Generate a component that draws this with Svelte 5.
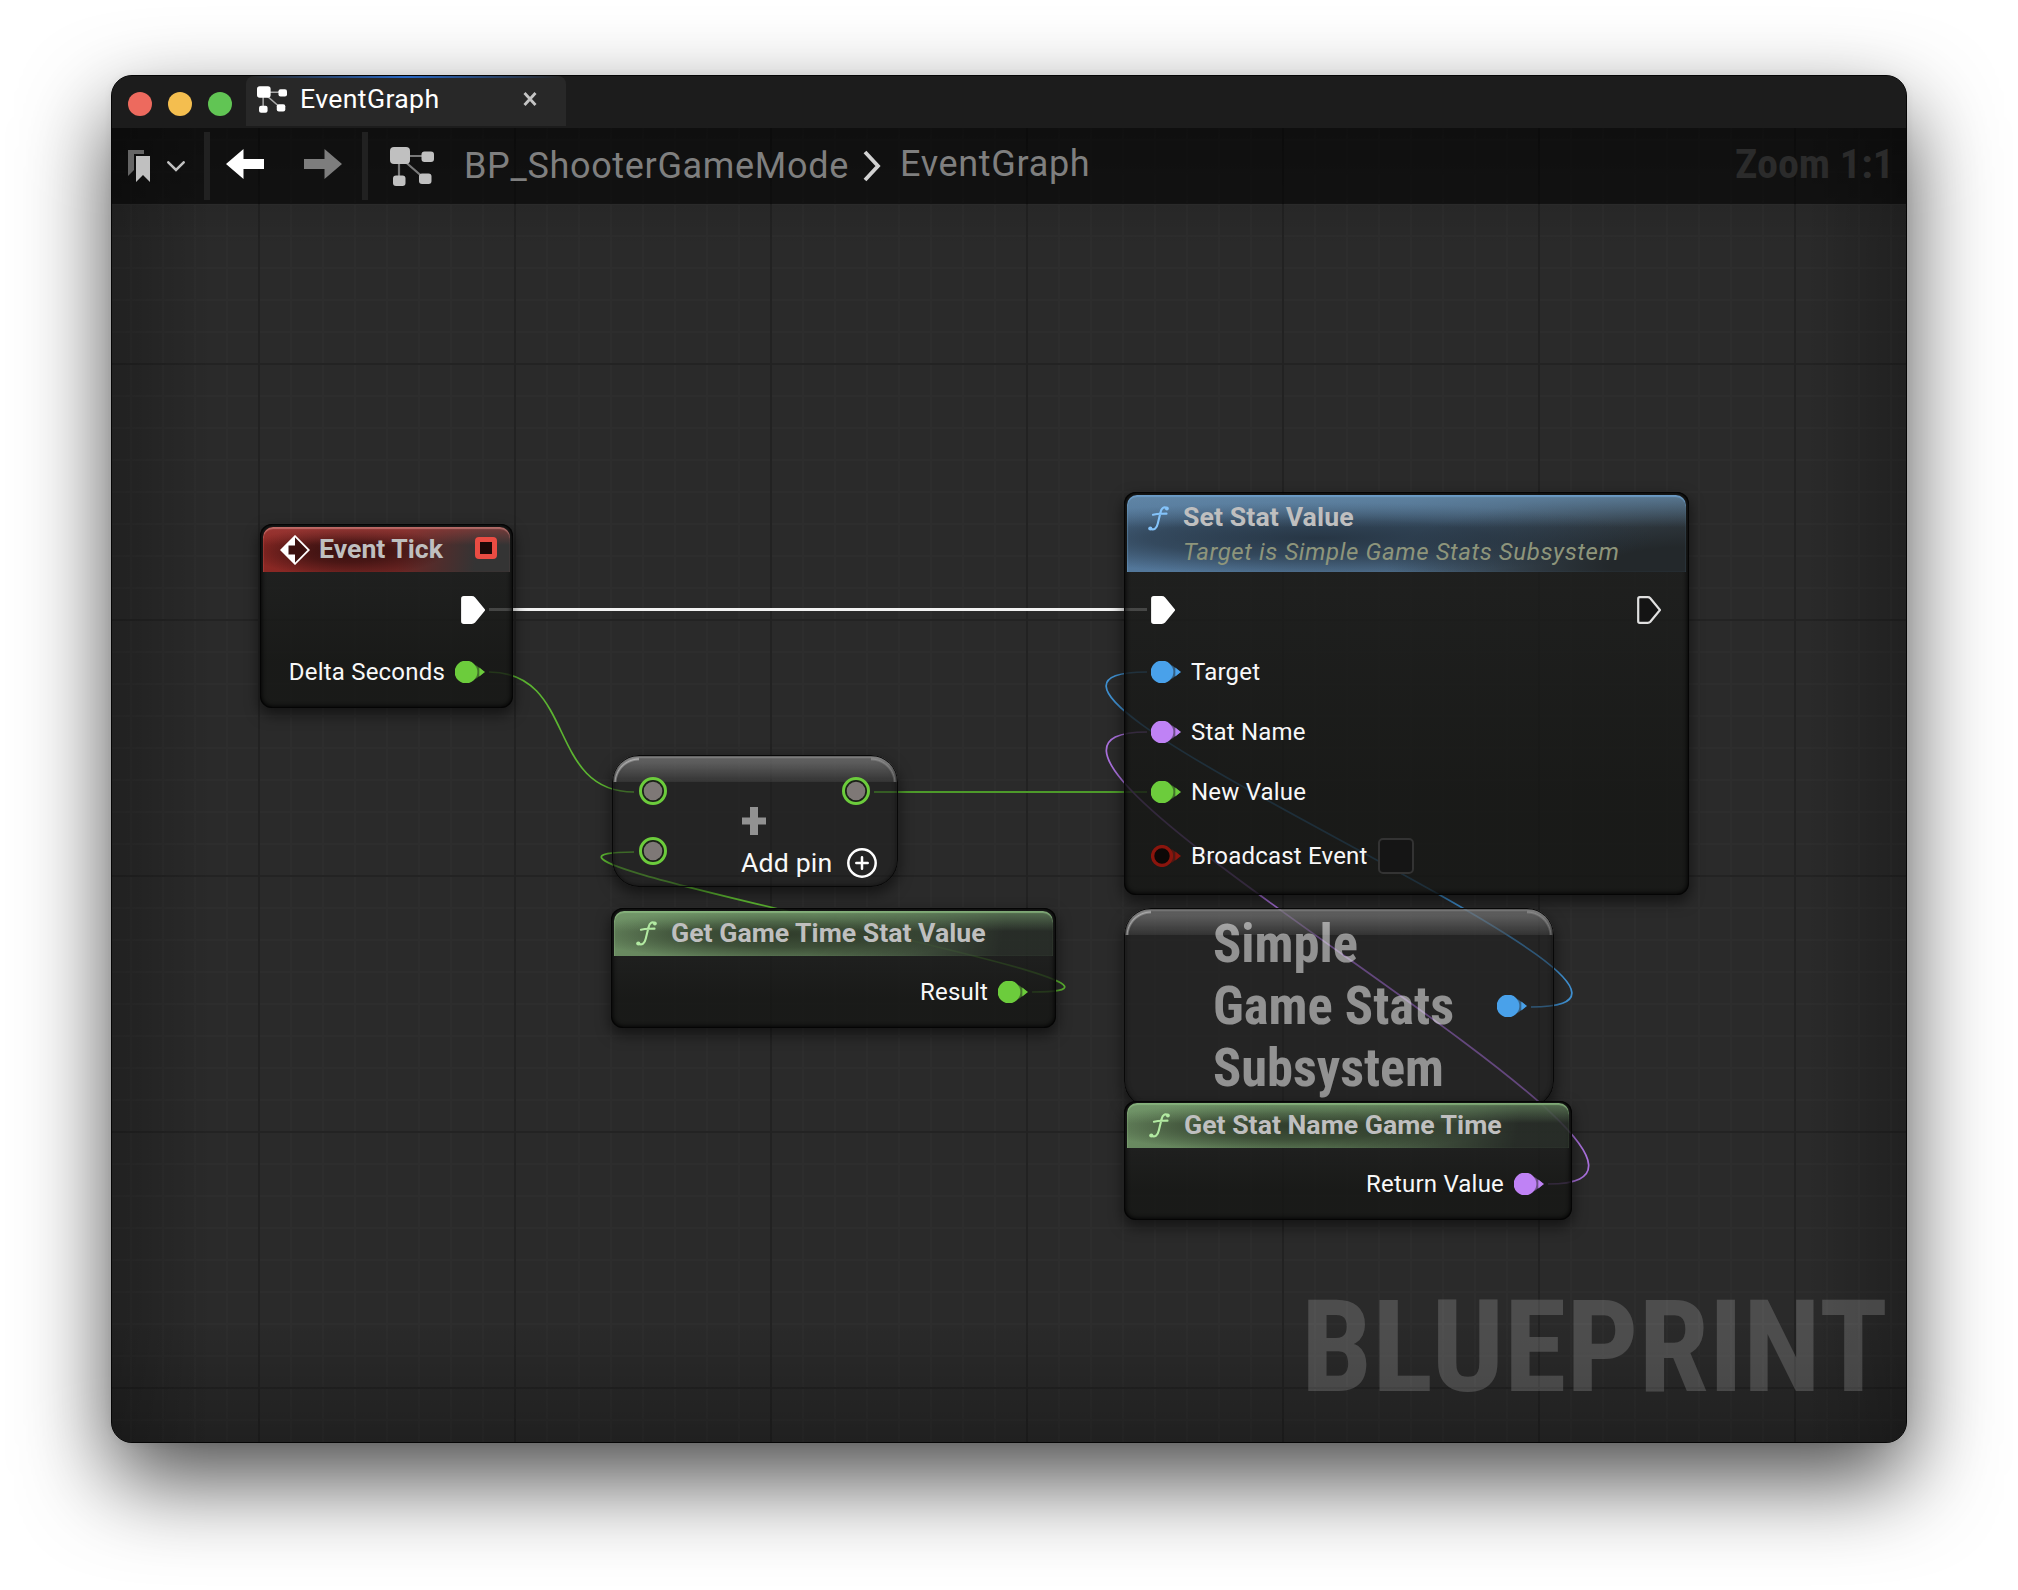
<script>
  const wires = [
    { kind: 'exec', d: 'M489 609.500 H1147' },
    { kind: 'float', d: 'M489 672 C577 672 546 792 634 792' },
    { kind: 'float wide', d: 'M874 792 H1147' },
    { kind: 'float', d: 'M1032 992 C1233 992 433 852 634 852' },
    { kind: 'object', d: 'M1531 1007 C1764 1007 914 672 1147 672' },
    { kind: 'name', d: 'M1548 1184 C1783 1184 912 732 1147 732' },
  ];
  const subsystem = [
    { text: 'Simple', y: 54, width: 145 },
    { text: 'Game Stats', y: 116, width: 241 },
    { text: 'Subsystem', y: 178, width: 231 },
  ];
</script>

{#snippet graphIcon(cls)}
  <svg class={cls} viewBox="0 0 44 39">
    <path d="M10 9 H38 M9 12 V33 M12 12 L35 32" fill="none" stroke="currentColor" stroke-opacity=".6" stroke-width="2.200" />
    <g fill="currentColor">
      <rect x="0" y="0" width="20" height="17" rx="4" />
      <rect x="31.500" y="4.500" width="12.500" height="10.500" rx="3" />
      <rect x="3" y="28.500" width="12.500" height="10.500" rx="3" />
      <rect x="29" y="26.500" width="12.500" height="10.500" rx="3" />
    </g>
  </svg>
{/snippet}

{#snippet pin(kind)}
  <svg class="pin {kind}" viewBox="0 0 30 22">
    <path d="M20.500 4 L30 11 L20.500 18 Z" fill="currentColor" opacity=".5" />
    <path d="M24.300 6.500 L29.800 11 L24.300 15.500 Z" fill="currentColor" />
    {#if kind === 'bool'}
      <circle cx="11" cy="11" r="9.400" fill="#0d0807" stroke="currentColor" stroke-width="3.400" />
    {:else}
      <circle cx="11" cy="11" r="11.400" fill="currentColor" />
    {/if}
  </svg>
{/snippet}

{#snippet exec(filled)}
  <svg class="exec" viewBox="0 0 24 28">
    <path d="M1.200 2.800 Q1.200 1.200 2.800 1.200 H10.800 Q12.300 1.200 13.300 2.300 L23 14 L13.300 25.700 Q12.300 26.800 10.800 26.800 H2.800 Q1.200 26.800 1.200 25.200 Z" fill={filled ? '#fff' : '#141414'} stroke={filled ? '#fff' : '#e0e0e0'} stroke-width="2.200" />
  </svg>
{/snippet}

{#snippet ring()}
  <svg class="ring" viewBox="0 0 28 28">
    <circle cx="14" cy="14" r="12.500" fill="#1b2118" stroke="#6ccc3c" stroke-width="3" />
    <circle cx="14" cy="14" r="9.300" fill="#7e7876" />
  </svg>
{/snippet}

{#snippet fn()}
  <svg class="fn" viewBox="0 0 21 25">
    <path d="M19 2.300 C16 .3 13.600 1.800 12.600 6 L9.800 17.500 C8.700 22.400 6.200 24.500 2.300 22.900 M5 8.700 C10 7.600 14 8 18.500 7.600" fill="none" stroke="currentColor" stroke-width="2.100" stroke-linecap="round" />
    <circle cx="18.900" cy="2.500" r="1.900" fill="currentColor" />
    <circle cx="2.300" cy="22.500" r="2.100" fill="currentColor" />
  </svg>
{/snippet}

<main>
  <div class="window">
    <header class="titlebar">
      <div class="lights"><i class="red"></i><i class="yellow"></i><i class="green"></i></div>
      <div class="tab">
        {@render graphIcon('tab-icon')}
        <span>EventGraph</span>
        <svg class="close" viewBox="0 0 14 14"><path d="M1.500 1 L12.500 13 M12.500 1 L1.500 13" stroke="#c4c4c4" stroke-width="2.800" /></svg>
      </div>
    </header>

    <section class="graph">
      <nav class="toolbar">
        <svg class="bookmark" viewBox="0 0 22 32">
          <path d="M0 0 H16 V4 H6 V20 L0 26 Z" fill="#656565" />
          <path d="M8 6 H22 V32 L15 25 L8 32 Z" fill="#c0c0c0" />
        </svg>
        <svg class="caret" viewBox="0 0 18 11"><path d="M1.300 1.300 L9 9 L16.700 1.300" fill="none" stroke="#c0c0c0" stroke-width="2.500" stroke-linecap="round" /></svg>
        <b class="sep first"></b>
        <svg class="arrow" viewBox="0 0 38 30"><path d="M0 15 L17.500 0 V10 H38 V20 H17.500 V30 Z" fill="#fff" /></svg>
        <svg class="arrow next" viewBox="0 0 38 30"><path d="M38 15 L20.500 0 V10 H0 V20 H20.500 V30 Z" fill="#7d7d7d" /></svg>
        <b class="sep second"></b>
        {@render graphIcon('crumb-icon')}
        <span class="crumb">BP_ShooterGameMode</span>
        <svg class="crumb-sep" viewBox="0 0 20 32"><path d="M3 2 L16 16 L3 30" fill="none" stroke="#d2d2d2" stroke-width="3.800" /></svg>
        <span class="crumb leaf">EventGraph</span>
        <svg class="zoom" viewBox="0 0 164 50"><text x="1" y="36.500" textLength="159" lengthAdjust="spacingAndGlyphs">Zoom 1:1</text></svg>
      </nav>

      <svg class="wires" viewBox="112 128 1794 1314">
        {#each wires as wire}<path class={wire.kind} d={wire.d} />{/each}
      </svg>

      <article class="node tick">
        <div class="head event">
          <svg class="diamond" viewBox="0 0 30 30">
            <path d="M15 1.200 L28.800 15 L15 28.800 L1.200 15 Z" fill="#3b1110" stroke="#fff" stroke-width="1.800" />
            <path d="M15 1 V10.500 H8.500 V19.500 H15 V29 L1 15 Z" fill="#fff" />
          </svg>
          <h2>Event Tick</h2>
          <em class="delegate"></em>
        </div>
        <div class="row out exec-row">{@render exec(true)}</div>
        <div class="row out">Delta Seconds{@render pin('float')}</div>
      </article>

      <article class="node compact add">
        <div class="add-top">{@render ring()}{@render ring()}</div>
        <svg class="plus" viewBox="0 0 24 28"><path d="M8 0 H16 V10.500 H24 V17.500 H16 V28 H8 V17.500 H0 V10.500 H8 Z" fill="#929292" /></svg>
        <div class="add-bottom">
          {@render ring()}
          <span>Add pin</span>
          <svg class="add-icon" viewBox="0 0 30 30"><circle cx="15" cy="15" r="13.700" fill="none" stroke="#fff" stroke-width="2.500" /><path d="M15 9.300 V20.700 M9.300 15 H20.700" stroke="#fff" stroke-width="2.500" stroke-linecap="round" /></svg>
        </div>
      </article>

      <article class="node game-time">
        <div class="head pure">{@render fn()}<h2>Get Game Time Stat Value</h2></div>
        <div class="row out">Result{@render pin('float')}</div>
      </article>

      <article class="node compact subsystem">
        <svg class="big" viewBox="0 0 260 196">
          {#each subsystem as line}<text x="1" y={line.y} textLength={line.width} lengthAdjust="spacingAndGlyphs">{line.text}</text>{/each}
        </svg>
        {@render pin('object')}
      </article>

      <article class="node set-stat">
        <div class="head call">
          {@render fn()}
          <div><h2>Set Stat Value</h2><p>Target is Simple Game Stats Subsystem</p></div>
        </div>
        <div class="row both">{@render exec(true)}{@render exec(false)}</div>
        <div class="row in">{@render pin('object')}Target</div>
        <div class="row in">{@render pin('name')}Stat Name</div>
        <div class="row in">{@render pin('float')}New Value</div>
        <div class="row in last">{@render pin('bool')}Broadcast Event<em class="check"></em></div>
      </article>

      <article class="node stat-name">
        <div class="head pure">{@render fn()}<h2>Get Stat Name Game Time</h2></div>
        <div class="row out">Return Value{@render pin('name')}</div>
      </article>

      <svg class="watermark" viewBox="0 0 600 150"><text x="5" y="119" textLength="587" lengthAdjust="spacingAndGlyphs">BLUEPRINT</text></svg>
    </section>
  </div>
</main>

<style>
  :global(body) { background: #fff; }
  main {
    box-sizing: border-box;
    width: 2018px;
    height: 1590px;
    padding: 75px 111px 147px;
    overflow: hidden;
    font-family: Roboto, "Liberation Sans", sans-serif;
    background: #fff;
  }
  svg { display: block; flex: none; }
  .window {
    box-sizing: border-box;
    height: 1368px;
    display: flex;
    flex-direction: column;
    border: 1px solid #050505;
    border-radius: 21px;
    overflow: hidden;
    background: #1c1c1c;
    box-shadow: 0 37px 88px rgba(0, 0, 0, .7), 0 0 8px rgba(0, 0, 0, .06);
  }
  .titlebar { flex: none; height: 52px; display: flex; background: #1c1c1c; }
  .lights { width: 134px; display: flex; gap: 16px; padding: 16px 0 0 16px; box-sizing: border-box; }
  .lights i { width: 24px; height: 24px; border-radius: 50%; }
  .red { background: #ed6a5e; }
  .yellow { background: #f4be4f; }
  .green { background: #61c554; }
  .tab {
    box-sizing: border-box;
    width: 320px;
    height: 50px;
    display: flex;
    align-items: center;
    padding: 0 29px 4px 11px;
    border-radius: 8px 8px 0 0;
    color: #fff;
    font-size: 26.67px;
    letter-spacing: .35px;
    background: linear-gradient(90deg, transparent 2%, #2767c6 50%, transparent 98%) top / 100% 2px no-repeat, #282828;
  }
  .tab span { margin-left: 13px; flex: 1; }
  .tab-icon { width: 30px; height: 27px; }
  .close { width: 14px; height: 14px; }

  .graph {
    flex: 1;
    position: relative;
    background:
      linear-gradient(90deg, rgba(0, 0, 0, .22), transparent 100px, transparent calc(100% - 100px), rgba(0, 0, 0, .22)),
      linear-gradient(rgba(0, 0, 0, .2), transparent 120px, transparent calc(100% - 120px), rgba(0, 0, 0, .24)),
      linear-gradient(90deg, #222 2px, transparent 2px) 146px 0 / 256px 256px,
      linear-gradient(#232323 2px, transparent 2px) 0 235px / 256px 256px,
      linear-gradient(90deg, #2d2d2d 2px, transparent 2px) 18px 0 / 32px 32px,
      linear-gradient(#2d2d2d 2px, transparent 2px) 0 11px / 32px 32px,
      #2a2a2a;
  }
  .toolbar {
    box-sizing: border-box;
    height: 76px;
    display: flex;
    align-items: center;
    padding-left: 16px;
    background: rgba(0, 0, 0, .54);
  }
  .bookmark { width: 22px; height: 32px; }
  .caret { width: 18px; height: 11px; margin-left: 17px; }
  .sep { width: 6px; height: 68px; background: #212121; }
  .sep.first { margin-left: 19px; }
  .sep.second { margin-left: 20px; }
  .arrow { width: 38px; height: 30px; margin: 0 0 4px 16px; }
  .arrow.next { margin-left: 40px; }
  .crumb-icon { width: 44px; height: 39px; margin-left: 22px; color: #c0c0c0; }
  .crumb { width: 396px; box-sizing: border-box; padding: 0 0 1px 30px; font-size: 36px; color: #7f7f7f; white-space: nowrap; letter-spacing: .67px; }
  .crumb-sep { width: 20px; height: 32px; margin-left: 32px; }
  .crumb.leaf { padding: 0 0 5px 18px; width: 240px; }
  .zoom { width: 164px; height: 50px; margin-left: auto; margin-right: 8px; }
  .zoom text { font: 700 41px "Roboto Condensed", Roboto, sans-serif; fill: #2b2b2b; }

  .wires { position: absolute; left: 0; top: 0; width: 1794px; height: 1314px; fill: none; }
  .wires path { stroke-width: 1.700; }
  .wires .exec { stroke: #f2f2f2; stroke-width: 3; }
  .wires .float { stroke: #5cb531; }
  .wires .wide { stroke: #4d9a2a; stroke-width: 2.200; }
  .wires .object { stroke: #3f8fcf; }
  .wires .name { stroke: #a970dc; }

  .node {
    position: absolute;
    box-sizing: border-box;
    padding: 3px 3px;
    border-radius: 12px;
    color: #f8f8f8;
    font-size: 24px;
    background: linear-gradient(rgba(29, 30, 29, .8) 40px, rgba(21, 22, 20, .8) 75%);
    box-shadow: inset 0 0 0 1px #050505, inset 0 0 4px 2px rgba(0, 0, 0, .8), 0 6px 14px 1px rgba(0, 0, 0, .5);
  }
  .tick { left: 148px; top: 396px; width: 253px; height: 184px; }
  .game-time { left: 499px; top: 780px; width: 445px; height: 120px; }
  .set-stat { left: 1012px; top: 364px; width: 565px; height: 403px; }
  .stat-name { left: 1012px; top: 973px; width: 448px; height: 119px; padding-top: 2px; }

  .head {
    box-sizing: border-box;
    height: 45px;
    display: flex;
    align-items: center;
    border-radius: 10px 10px 0 0;
  }
  .head.event {
    padding: 0 13px 0 17px;
    background:
      linear-gradient(rgba(165, 65, 62, .6), transparent 40%),
      radial-gradient(ellipse 100px 25px at 34% 54%, rgba(42, 12, 12, .85), rgba(42, 12, 12, .6) 45%, transparent),
      linear-gradient(100deg, #8d2824 0, #6e2523 55%, #343434 86%);
    box-shadow: inset 0 2px 1px rgba(215, 140, 135, .6), inset 1px 0 1px rgba(190, 70, 66, .4);
  }
  .head.pure {
    padding-left: 22px;
    background:
      linear-gradient(rgba(120, 160, 112, .6), transparent 45%),
      radial-gradient(ellipse 200px 26px at 38% 52%, rgba(40, 50, 36, .85), rgba(40, 50, 36, .6) 50%, transparent),
      linear-gradient(100deg, #6a8b61 0, #5c7854 45%, rgba(50, 60, 50, .45) 88%);
    box-shadow: inset 0 2px 1px rgba(140, 185, 130, .75), inset 1px 0 1px rgba(140, 180, 130, .4);
    color: #b2eaa2;
  }
  .head.call {
    height: 77px;
    padding-left: 21px;
    align-items: flex-start;
    background:
      linear-gradient(rgba(100, 138, 170, .75), transparent 42%),
      radial-gradient(ellipse 340px 36px at 34% 56%, rgba(32, 44, 56, .85), rgba(32, 44, 56, .6) 50%, transparent),
      radial-gradient(ellipse 300px 75px at 100% 92%, #23282b 25%, transparent),
      linear-gradient(90deg, #53779a 0, #4c6a86 50%, #3a4650 100%);
    box-shadow: inset 0 2px 1px rgba(110, 160, 205, .8), inset 1px 0 1px rgba(110, 160, 200, .4);
    color: #84c3fa;
  }
  h2 { margin: 0 0 0 14px; font-size: 26.67px; line-height: 42px; font-weight: 700; color: #bfbfbf; white-space: nowrap; position: relative; top: -1px; }
  .head.event h2 { margin-left: 9px; }
  .head.call h2 { margin: 0; line-height: 46px; letter-spacing: .1px; }
  .head.call div { margin-left: 14px; }
  .head.call .fn { margin-top: 11px; }
  p { margin: -1px 0 0; font-size: 24px; line-height: 24px; font-style: italic; color: #8e957b; white-space: nowrap; letter-spacing: .6px; }
  .fn { width: 21px; height: 25px; }
  .diamond { width: 30px; height: 30px; }
  .delegate { width: 22px; height: 22px; box-sizing: border-box; border: 5px solid #ea4c43; border-radius: 4px; background: #1c0807; margin: -4px 0 0 auto; }

  .row { display: flex; align-items: center; height: 60px; margin-top: 6px; white-space: nowrap; letter-spacing: .2px; }
  .row.out { justify-content: flex-end; padding-right: 25px; gap: 10px; }
  .row.exec-row { height: 64px; }
  .tick .row + .row { margin-top: 0; }
  .row.both { height: 64px; justify-content: space-between; padding: 0 25px 0 24px; }
  .row.in { margin-top: 0; padding-left: 24px; gap: 10px; }
  .row.last { margin-top: 4px; }
  .pin { width: 30px; height: 22px; }
  .exec { width: 24px; height: 28px; }
  .float { color: #6ccc3c; }
  .object { color: #49a1ea; }
  .name { color: #bf82f5; }
  .bool { color: #8a150d; }
  .check { box-sizing: border-box; width: 36px; height: 36px; border: 2px solid #333; border-radius: 5px; background: #151515; }

  .compact {
    padding: 0;
    border-radius: 27px;
    background:
      radial-gradient(circle at 27px 27px, transparent 22px, rgba(230, 230, 230, .7) 24px, transparent 26px) 0 1px / 27px 26px no-repeat,
      radial-gradient(circle at 0 27px, transparent 22px, rgba(210, 210, 210, .45) 24px, transparent 26px) 100% 1px / 27px 26px no-repeat,
      linear-gradient(rgba(140, 140, 140, .65), rgba(80, 80, 80, .35)) 0 2px / 100% 25px no-repeat,
      rgba(30, 30, 30, .5);
    box-shadow: inset 0 0 0 1px #080808, inset 0 3px 2px rgba(200, 200, 200, .45), inset 0 0 5px 1px rgba(0, 0, 0, .6), 0 6px 14px 1px rgba(0, 0, 0, .5);
  }
  .add { left: 500px; top: 627px; width: 286px; height: 132px; }
  .ring { width: 28px; height: 28px; }
  .add-top { display: flex; justify-content: space-between; padding: 22px 28px 0 27px; }
  .plus { width: 24px; height: 28px; margin: 2px 0 0 130px; }
  .add-bottom { display: flex; align-items: center; height: 28px; margin-top: 2px; padding-left: 27px; }
  .add-bottom span { margin: 24px 0 0 74px; width: 106px; font-size: 26.67px; line-height: 28px; letter-spacing: .15px; }
  .add-icon { width: 30px; height: 30px; margin-top: 24px; }
  .subsystem { left: 1012px; top: 780px; width: 430px; height: 200px; display: flex; align-items: center; }
  .big { width: 260px; height: 196px; margin-left: 88px; margin-top: -4px; }
  .big text { font: 700 53.3px "Roboto Condensed", Roboto, sans-serif; fill: rgba(255, 255, 255, .5); }
  .subsystem .pin { margin-left: 25px; margin-top: -4px; }

  .watermark { position: absolute; right: 10px; bottom: 20px; width: 600px; height: 150px; }
  .watermark text { font: 700 128px "Roboto Condensed", Roboto, sans-serif; fill: rgba(255, 255, 255, .17); }
</style>
